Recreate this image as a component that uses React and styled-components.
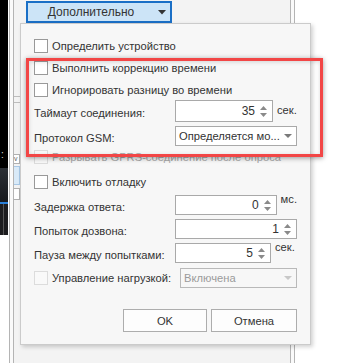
import React from "react";
import styled, { createGlobalStyle } from "styled-components";

const Global = createGlobalStyle`
  html, body { margin: 0; padding: 0; background: #fff; }
  body { font-family: "Liberation Sans", Arial, sans-serif; font-size: 11.2px; color: #333; }
`;

export default function App() {
  return (
    <>
      <Global />
      <Screen>
        <Taskbar>
          <Black $h={150} />
          <Dots>:</Dots>
          <DarkBlock $h={34} />
          <BlueLine />
          <DarkTail>
            <TailLine />
          </DarkTail>
        </Taskbar>
        <WhiteGap />
        <Frame>
          <Inner>
            <Gutter>
              <GroupEdge $mt={96} />
              <GroupEdge $mt={5} />
              <MiniCombo $mt={51}>v</MiniCombo>
              <MiniTab $mt={2} $active />
              <MiniTab $mt={3} />
            </Gutter>
            <Main>
              <MoreButton>
                <MoreText>Дополнительно</MoreText>
                <MoreArrow>
                  <svg width="8" height="5" viewBox="0 0 8 5">
                    <path d="M0 0h8L4 4.5z" fill="#333" />
                  </svg>
                </MoreArrow>
              </MoreButton>
            </Main>
          </Inner>
        </Frame>

        <Popup>
          <Row $h={23}>
            <Check />
            <CheckLabel>Определить устройство</CheckLabel>
          </Row>
          <Row $h={22}>
            <Check />
            <CheckLabel>Выполнить коррекцию времени</CheckLabel>
          </Row>
          <Row $h={21}>
            <Check />
            <CheckLabel>Игнорировать разницу во времени</CheckLabel>
          </Row>
          <Row $h={22}>
            <FieldLabel>Таймаут соединения:</FieldLabel>
            <Spin $w={98} $h={22} value="35" />
            <Unit>сек.</Unit>
          </Row>
          <Row $h={22} $mt={3}>
            <FieldLabel>Протокол GSM:</FieldLabel>
            <Select $w={122}>
              <SelectText>Определяется мо...</SelectText>
              <SelectArrow />
            </Select>
          </Row>
          <Row $h={20}>
            <Check $disabled />
            <CheckLabel $disabled>Разрывать GPRS-соединение после опроса</CheckLabel>
          </Row>
          <Row $h={22} $mt={4}>
            <Check />
            <CheckLabel>Включить отладку</CheckLabel>
          </Row>
          <Row $h={20} $mt={2}>
            <FieldLabel>Задержка ответа:</FieldLabel>
            <Spin $w={103} value="0" />
            <Unit $raised>мс.</Unit>
          </Row>
          <Row $h={20} $mt={4}>
            <FieldLabel>Попыток дозвона:</FieldLabel>
            <Spin $w={122} value="1" />
          </Row>
          <Row $h={20} $mt={4}>
            <FieldLabel>Пауза между попытками:</FieldLabel>
            <Spin $w={96} value="5" />
            <Unit $raised>сек.</Unit>
          </Row>
          <Row $h={21} $mt={4}>
            <Check $disabled />
            <CheckLabel>Управление нагрузкой:</CheckLabel>
            <Select $w={117} $disabled>
              <SelectText $disabled>Включена</SelectText>
              <SelectArrow $disabled />
            </Select>
          </Row>
          <Buttons>
            <DialogButton $w={84}>OK</DialogButton>
            <DialogButton $w={86}>Отмена</DialogButton>
          </Buttons>
        </Popup>

        <Highlight />
      </Screen>
    </>
  );
}

function Spin({ value, $w, $h = 20 }) {
  return (
    <SpinBox $w={$w} $h={$h}>
      <SpinValue>{value}</SpinValue>
      <SpinArrows>
        <svg width="7" height="4" viewBox="0 0 7 4">
          <path d="M0 4L3.5 0L7 4z" fill="#8a8a8a" />
        </svg>
        <svg width="7" height="4" viewBox="0 0 7 4">
          <path d="M0 0h7L3.5 4z" fill="#8a8a8a" />
        </svg>
      </SpinArrows>
    </SpinBox>
  );
}

function SelectArrow({ $disabled }) {
  return (
    <ArrowSlot>
      <svg width="8" height="4" viewBox="0 0 8 4">
        <path d="M0 0h8L4 4z" fill={$disabled ? "#c8c8c8" : "#7a7a7a"} />
      </svg>
    </ArrowSlot>
  );
}

// layout of the background window

const Screen = styled.div`
  position: relative;
  display: flex;
  width: 345px;
  height: 363px;
  overflow: hidden;
  background: #fff;
`;

const Taskbar = styled.div`
  width: 8px;
  display: flex;
  flex-direction: column;
`;

const Black = styled.div`
  height: ${(p) => p.$h}px;
  background: #000;
`;

const Dots = styled.div`
  height: 18px;
  background: #000;
  color: #ddd;
  font-size: 10px;
  line-height: 10px;
  padding-left: 1px;
`;

const DarkBlock = styled.div`
  height: ${(p) => p.$h}px;
  background: linear-gradient(#2c3036, #17191d);
`;

const BlueLine = styled.div`
  height: 2px;
  background: #2a7fd8;
`;

const DarkTail = styled.div`
  height: 31px;
  background: #1c1c1e;
  padding-left: 3px;
`;

const TailLine = styled.div`
  height: 100%;
  border-left: 1px solid #555;
`;

const WhiteGap = styled.div`
  width: 1px;
`;

const Frame = styled.div`
  width: 286px;
  box-sizing: border-box;
  border-left: 1px solid #b4b4b4;
  border-right: 1px solid #b4b4b4;
  padding: 0 3px;
  background: #fafafa;
`;

const Inner = styled.div`
  height: 100%;
  display: flex;
  border-left: 1px solid #b4b4b4;
  border-right: 1px solid #b4b4b4;
  background: #f3f3f3;
`;

const Gutter = styled.div`
  width: 6px;
  display: flex;
  flex-direction: column;
`;

const GroupEdge = styled.div`
  margin-top: ${(p) => p.$mt}px;
  height: 1px;
  background: #bdbdbd;
`;

const MiniCombo = styled.div`
  margin-top: ${(p) => p.$mt}px;
  height: 8px;
  border: 1px solid #b0b0b0;
  border-left: none;
  background: #fff;
  font-size: 7px;
  line-height: 7px;
  color: #666;
`;

const MiniTab = styled.div`
  margin-top: ${(p) => p.$mt}px;
  height: ${(p) => (p.$active ? 17 : 10)}px;
  border: 1px solid ${(p) => (p.$active ? "#a8c8e6" : "#b0b0b0")};
  border-left: none;
  background: ${(p) => (p.$active ? "#d9eaf8" : "#fff")};
`;

const Main = styled.div`
  flex: 1;
  padding: 1px 0 0 6px;
`;

const MoreButton = styled.div`
  width: 146px;
  height: 22px;
  box-sizing: border-box;
  display: flex;
  align-items: center;
  border: 2px solid #1a6fc6;
  background: #cce4f7;
`;

const MoreText = styled.span`
  flex: 1;
  text-align: center;
  font-size: 12px;
  color: #333;
`;

const MoreArrow = styled.span`
  width: 16px;
  display: flex;
  justify-content: center;
`;

// popup

const Popup = styled.div`
  position: absolute;
  left: 20px;
  top: 23px;
  width: 291px;
  height: 322px;
  box-sizing: border-box;
  padding: 10px 13px 0 13px;
  display: flex;
  flex-direction: column;
  background: #f7f7f7;
  border: 1px solid #cbcbcb;
  box-shadow: 2px 2px 4px rgba(0, 0, 0, 0.18);
`;

const Row = styled.div`
  display: flex;
  align-items: center;
  height: ${(p) => p.$h}px;
  margin-top: ${(p) => p.$mt || 0}px;
  flex-shrink: 0;
`;

const Check = styled.span`
  width: 14px;
  height: 14px;
  box-sizing: border-box;
  flex-shrink: 0;
  background: ${(p) => (p.$disabled ? "#f9f9f9" : "#fff")};
  border: 1px solid ${(p) => (p.$disabled ? "#dcdcdc" : "#999")};
  margin-right: 4px;
`;

const CheckLabel = styled.span`
  white-space: nowrap;
  color: ${(p) => (p.$disabled ? "#a8a8a8" : "#333")};
`;

const FieldLabel = styled.span`
  width: 141px;
  flex-shrink: 0;
  white-space: nowrap;
  padding-top: 3px;
`;

const Unit = styled.span`
  margin-left: 4px;
  align-self: ${(p) => (p.$raised ? "flex-start" : "center")};
  margin-top: -2px;
`;

const SpinBox = styled.div`
  width: ${(p) => p.$w}px;
  height: ${(p) => p.$h}px;
  box-sizing: border-box;
  display: flex;
  align-items: center;
  background: #fff;
  border: 1px solid #a9a9a9;
`;

const SpinValue = styled.span`
  flex: 1;
  text-align: right;
  padding-right: 5px;
  font-size: 12px;
`;

const SpinArrows = styled.span`
  width: 12px;
  height: 100%;
  display: flex;
  flex-direction: column;
  justify-content: center;
  gap: 3px;
  align-items: flex-start;
`;

const Select = styled.div`
  width: ${(p) => p.$w}px;
  height: 20px;
  box-sizing: border-box;
  margin-left: auto;
  display: flex;
  align-items: center;
  background: ${(p) => (p.$disabled ? "#f7f7f7" : "#fff")};
  border: 1px solid ${(p) => (p.$disabled ? "#b9b9b9" : "#a9a9a9")};
`;

const SelectText = styled.span`
  flex: 1;
  padding-left: 3px;
  white-space: nowrap;
  color: ${(p) => (p.$disabled ? "#9a9a9a" : "#333")};
`;

const ArrowSlot = styled.span`
  width: 16px;
  display: flex;
  justify-content: center;
`;

const Buttons = styled.div`
  display: flex;
  justify-content: flex-end;
  gap: 4px;
  margin-top: 21px;
`;

const DialogButton = styled.div`
  width: ${(p) => p.$w}px;
  height: 23px;
  box-sizing: border-box;
  display: flex;
  align-items: center;
  justify-content: center;
  background: #fdfdfd;
  border: 1px solid #adadad;
  color: #333;
`;

// annotation overlay

const Highlight = styled.div`
  position: absolute;
  left: 26px;
  top: 58px;
  width: 297px;
  height: 99px;
  box-sizing: border-box;
  border: 3px solid #f24646;
  box-shadow: 0 1px 5px rgba(0, 0, 0, 0.4), inset 0 1px 4px rgba(0, 0, 0, 0.15);
`;
